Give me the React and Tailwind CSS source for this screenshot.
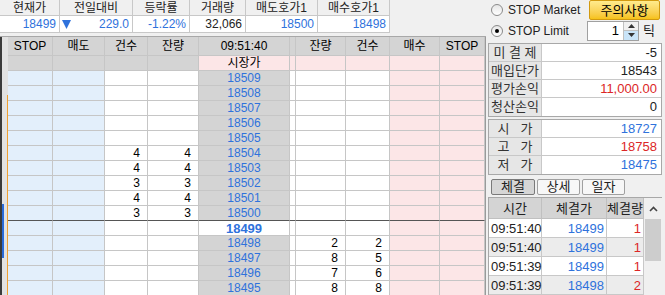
const F = 'font-[family-name:Liberation_Sans,Noto_Sans_CJK_KR,sans-serif]'
const blue = 'text-[#2f72dc]'
const red = 'text-[#dc2626]'

const W = ['w-[45px]', 'w-[52px]', 'w-[43px]', 'w-[51px]', 'w-[91px]', 'w-[6px]', 'w-[50px]', 'w-[44px]', 'w-[50px]', 'w-[45px]']
const BL = 'bg-[#e3effb]'
const PK = 'bg-[#fce6e7]'
const GR = 'bg-[#d4d4d4]'
const WH = 'bg-white'

const asks = [
  [18509], [18508], [18507], [18506], [18505],
  [18504, 4, 4], [18503, 4, 4], [18502, 3, 3], [18501, 4, 4], [18500, 3, 3],
]
const bids = [[18498, 2, 2], [18497, 8, 5], [18496, 7, 6], [18495, 8, 8]]

const trades = [
  ['09:51:40', 18499, 1],
  ['09:51:40', 18499, 1],
  ['09:51:39', 18499, 1],
  ['09:51:39', 18498, 2],
]

function Cell({ i, bg, className = '', children }) {
  return (
    <div className={`${W[i]} ${bg} h-full shrink-0 border-r border-b border-[#c6c6c6] flex items-center ${className}`}>
      {children}
    </div>
  )
}

function PriceRow({ price, a, b, side, last }) {
  const bgs = [BL, BL, WH, WH, GR, WH, WH, WH, PK, PK]
  const bd = last ? 'border-b-[#555555]' : ''
  const num = 'justify-end pr-[7px] text-black'
  return (
    <div className="flex h-[15px]">
      {bgs.map((bg, i) => {
        let content = null
        let cls = bd
        if (i === 4) { content = price; cls += ` justify-center ${blue}` }
        if (side === 'ask' && i === 2 && a) { content = a; cls += ` ${num}` }
        if (side === 'ask' && i === 3 && b) { content = b; cls += ` ${num}` }
        if (side === 'bid' && i === 6 && a) { content = a; cls += ` ${num}` }
        if (side === 'bid' && i === 7 && b) { content = b; cls += ` ${num}` }
        return <Cell key={i} i={i} bg={bg} className={cls}>{content}</Cell>
      })}
    </div>
  )
}

function Radio({ checked }) {
  return (
    <div className="w-[12px] h-[12px] rounded-full border border-[#8a8a8a] bg-linear-to-b from-[#e6e6e6] to-white flex items-center justify-center">
      {checked && <div className="w-[4px] h-[4px] rounded-full bg-black" />}
    </div>
  )
}

function InfoRow({ label, value, color = 'text-[#222]', last }) {
  return (
    <div className={`flex h-[18px] ${last ? '' : 'border-b border-[#c8c8c8]'}`}>
      <div className="w-[53px] shrink-0 bg-[#e6e6e6] border-r border-[#c8c8c8] flex items-center justify-center text-[13px] text-[#333] whitespace-pre">{label}</div>
      <div className={`flex-1 bg-white flex items-center justify-end pr-[4px] text-[13px] ${color}`}>{value}</div>
    </div>
  )
}

export default function App() {
  return (
    <div className={`w-[665px] h-[295px] overflow-hidden bg-[#f0f0f0] flex text-[12px] leading-none ${F}`}>
      {/* left: quotes + order book */}
      <div className="w-[486px] shrink-0 flex flex-col">
        <div className="w-[390px] flex flex-col">
          <div className="flex h-[16px]">
            {[['현재가', 'w-[60px]'], ['전일대비', 'w-[73px]'], ['등락률', 'w-[57px]'], ['거래량', 'w-[56px]'], ['매도호가1', 'w-[72px]'], ['매수호가1', 'w-[72px]']].map(([t, w]) => (
              <div key={t} className={`${w} border-r border-b border-[#c8c8c8] bg-[#f0f0f0] flex items-center justify-center text-[#222]`}>{t}</div>
            ))}
          </div>
          <div className="flex h-[17px] bg-white">
            <div className={`w-[60px] border-r border-b border-[#c8c8c8] flex items-center justify-end pr-[3px] ${blue}`}>18499</div>
            <div className={`w-[73px] border-r border-b border-[#c8c8c8] flex items-center justify-between pl-[2px] pr-[3px] ${blue}`}>
              <svg width="9" height="9" viewBox="0 0 9 9"><polygon points="0,0 9,0 4.5,9" fill="#2f72dc" /></svg>
              <span>229.0</span>
            </div>
            <div className={`w-[57px] border-r border-b border-[#c8c8c8] flex items-center justify-end pr-[3px] ${blue}`}>-1.22%</div>
            <div className="w-[56px] border-r border-b border-[#c8c8c8] flex items-center justify-end pr-[3px] text-[#222]">32,066</div>
            <div className={`w-[72px] border-r border-b border-[#c8c8c8] flex items-center justify-end pr-[3px] ${blue}`}>18500</div>
            <div className={`w-[72px] border-r border-b border-[#c8c8c8] flex items-center justify-end pr-[3px] ${blue}`}>18498</div>
          </div>
        </div>

        <div className="mt-[3px] flex flex-1 border-t border-[#a8a8a8]">
          <div className="w-[8px] shrink-0 relative bg-[#e2e2e2] border-l-2 border-[#3a3a3a]">
            <div className="absolute right-0 top-[58px] bottom-0 w-px bg-[#f0a030]" />
            <div className="absolute left-0 top-[167px] h-[54px] w-[2px] bg-[#2a6ad8]" />
          </div>
          <div className="flex flex-col border-r border-[#9a9a9a]">
            <div className="flex h-[19px]">
              {['STOP', '매도', '건수', '잔량', '09:51:40', '', '잔량', '건수', '매수', 'STOP'].map((t, i) => (
                <Cell key={i} i={i} bg={GR} className="justify-center text-black text-[12px] border-[#b8b8b8]">{t}</Cell>
              ))}
            </div>
            <div className="flex h-[15px]">
              {[GR, GR, GR, GR, PK, PK, PK, PK, PK, PK].map((bg, i) => (
                <Cell key={i} i={i} bg={bg} className="justify-center text-black">{i === 4 ? '시장가' : null}</Cell>
              ))}
            </div>
            {asks.map(([p, a, b], k) => (
              <PriceRow key={p} price={p} a={a} b={b} side="ask" last={k === asks.length - 1} />
            ))}
            <div className="flex h-[15px]">
              {[BL, BL, WH, WH, WH, WH, WH, WH, PK, PK].map((bg, i) => (
                <Cell key={i} i={i} bg={bg} className={`justify-center font-bold text-[13px] ${blue}`}>{i === 4 ? '18499' : null}</Cell>
              ))}
            </div>
            {bids.map(([p, a, b]) => (
              <PriceRow key={p} price={p} a={a} b={b} side="bid" />
            ))}
          </div>
        </div>
      </div>

      {/* right panel */}
      <div className="flex-1 flex flex-col pl-[2px] pr-[3px] text-[#222]">
        <div className="h-[24px] flex items-center pl-[3px]">
          <Radio />
          <span className="ml-[5px] text-[12px]">STOP Market</span>
          <button className="ml-auto mr-[2px] w-[71px] h-[20px] rounded-[2px] border border-[#d29a10] bg-linear-to-b from-[#ffeb8c] to-[#f6c214] text-[13px] text-black">주의사항</button>
        </div>
        <div className="h-[23px] flex items-center pl-[3px]">
          <Radio checked />
          <span className="ml-[5px] text-[12px]">STOP Limit</span>
          <div className="ml-auto flex items-center">
            <div className="w-[52px] h-[20px] bg-white border border-[#a0a0a0] flex">
              <div className="flex-1 flex items-center justify-end pr-[4px] text-[13px] text-black">1</div>
              <div className="w-[15px] flex flex-col border-l border-[#c0c0c0]">
                <div className="flex-1 bg-[#f0f0f0] flex items-center justify-center border-b border-[#c0c0c0]">
                  <svg width="7" height="4" viewBox="0 0 7 4"><polygon points="0,4 7,4 3.5,0" fill="#333" /></svg>
                </div>
                <div className="flex-1 bg-[#c9e4f8] flex items-center justify-center">
                  <svg width="7" height="4" viewBox="0 0 7 4"><polygon points="0,0 7,0 3.5,4" fill="#333" /></svg>
                </div>
              </div>
            </div>
            <span className="ml-[4px] mr-[7px] text-[13px]">틱</span>
          </div>
        </div>

        <div className="mt-[2px] border border-[#a8a8a8]">
          <InfoRow label="미 결 제" value="-5" />
          <InfoRow label="매입단가" value="18543" />
          <InfoRow label="평가손익" value="11,000.00" color={red} />
          <InfoRow label="청산손익" value="0" last />
        </div>
        <div className="mt-[2px] border border-[#a8a8a8]">
          <InfoRow label="시   가" value="18727" color={blue} />
          <InfoRow label="고   가" value="18758" color={red} />
          <InfoRow label="저   가" value="18475" color={blue} last />
        </div>

        <div className="mt-[4px] flex gap-[2px] pl-[3px] h-[19px]">
          <div className="w-[44px] rounded-[2px] border border-[#7a7a7a] bg-[#d6d6d6] flex items-center justify-center text-[13px]">체결</div>
          <div className="w-[43px] rounded-[2px] border border-[#a0a0a0] bg-[#f7f7f7] flex items-center justify-center text-[13px]">상세</div>
          <div className="w-[43px] rounded-[2px] border border-[#a0a0a0] bg-[#f7f7f7] flex items-center justify-center text-[13px]">일자</div>
        </div>

        <div className="mt-[2px] flex-1 flex border-l border-t border-[#a8a8a8] bg-white">
          <div className="w-[155px] flex flex-col">
            <div className="flex h-[21px] text-[13px]">
              <div className="w-[53px] bg-[#d4d4d4] border-r border-b border-[#c0c0c0] flex items-center justify-center">시간</div>
              <div className="w-[65px] bg-[#d4d4d4] border-r border-b border-[#c0c0c0] flex items-center justify-center">체결가</div>
              <div className="w-[37px] bg-[#d4d4d4] border-r border-b border-[#c0c0c0] flex items-center justify-center">체결량</div>
            </div>
            {trades.map(([t, p, q], k) => (
              <div key={k} className={`flex h-[19px] text-[13px] ${k % 2 ? 'bg-[#ececec]' : 'bg-white'}`}>
                <div className="w-[53px] border-r border-b border-[#c8c8c8] flex items-center pl-[2px]">{t}</div>
                <div className={`w-[65px] border-r border-b border-[#c8c8c8] flex items-center justify-end pr-[2px] ${blue}`}>{p}</div>
                <div className={`w-[37px] border-r border-b border-[#c8c8c8] flex items-center justify-end pr-[2px] ${red}`}>{q}</div>
              </div>
            ))}
          </div>
          <div className="ml-auto w-[18px] flex flex-col bg-[#f0f0f0]">
            <div className="h-[21px] flex items-center justify-center">
              <svg width="9" height="6" viewBox="0 0 9 6"><polyline points="1,5 4.5,1.5 8,5" fill="none" stroke="#444" strokeWidth="1.6" /></svg>
            </div>
            <div className="mx-[1px] h-[42px] bg-[#cdcdcd]" />
          </div>
        </div>
      </div>
    </div>
  )
}
